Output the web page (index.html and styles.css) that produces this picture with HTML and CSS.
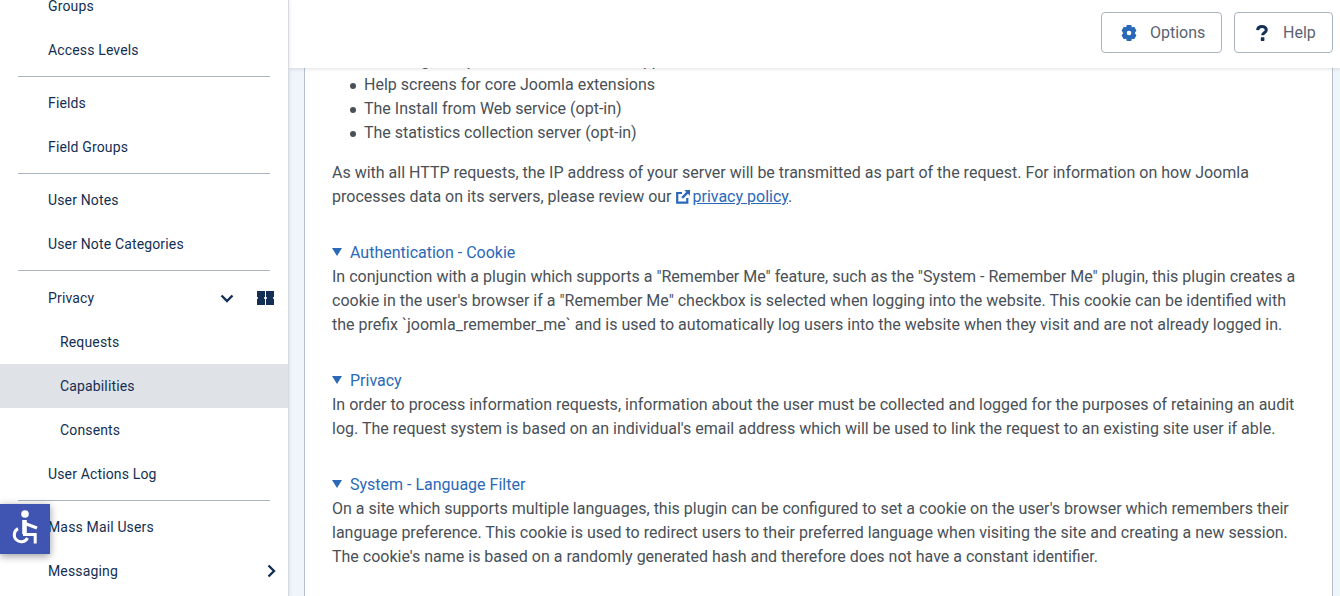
FILE: index.html
```html
<!DOCTYPE html>
<html lang="en">
<head>
<meta charset="utf-8">
<title>Privacy: Capabilities</title>
<link rel="stylesheet" href="styles.css">
</head>
<body>
<div class="app">
  <nav class="sidebar">
    <ul class="menu">
      <li class="item">Groups</li>
      <li class="item">Access Levels</li>
      <li class="divider"></li>
      <li class="item">Fields</li>
      <li class="item">Field Groups</li>
      <li class="divider"></li>
      <li class="item">User Notes</li>
      <li class="item">User Note Categories</li>
      <li class="divider"></li>
      <li class="item">Privacy
        <svg class="chev-down" viewBox="0 0 14 9"><path d="M1.500 1.500 7 7l5.500-5.500" fill="none" stroke="currentColor" stroke-width="2.400"/></svg>
        <svg class="dash" viewBox="0 0 17 14"><path d="M0 0h8v6h-.8v2H8v6H0V8h.8V6H0zM9 0h8v6h-.8v2h.8v6H9V8h.8V6H9z" fill="currentColor"/></svg>
      </li>
      <li class="item sub">Requests</li>
      <li class="item sub active">Capabilities</li>
      <li class="item sub">Consents</li>
      <li class="item">User Actions Log</li>
      <li class="divider"></li>
      <li class="item">Mass Mail Users</li>
      <li class="item">Messaging
        <svg class="chev-right" viewBox="0 0 9 14"><path d="M1.500 1.500 7 7l-5.500 5.500" fill="none" stroke="currentColor" stroke-width="2.400"/></svg>
      </li>
    </ul>
  </nav>
  <main class="main">
    <header class="toolbar">
      <button class="btn btn-options">
        <svg class="ico-gear" viewBox="0 0 16 16"><path fill-rule="evenodd" d="M5.800 0h4.400l.7 2.200 2.300-.5 2.200 3.800L13.800 8l1.600 2.500-2.200 3.800-2.300-.5-.7 2.200H5.800l-.7-2.200-2.300.5L.6 10.500 2.200 8 .6 5.500l2.200-3.800 2.300.5zM8 5.700a2.300 2.300 0 1 0 0 4.600 2.300 2.300 0 0 0 0-4.600z" fill="currentColor"/></svg>
        <span>Options</span>
      </button>
      <button class="btn btn-help">
        <svg class="ico-help" viewBox="0 0 12 16"><path d="M1.600 5.200C1.800 2.900 3.500 1.600 6 1.600c2.500 0 4.300 1.300 4.300 3.300 0 2.900-3.700 2.700-3.700 5.400" fill="none" stroke="currentColor" stroke-width="3"/><rect x="4.800" y="12.300" width="3.600" height="3.600" rx=".6" fill="currentColor"/></svg>
        <span>Help</span>
      </button>
    </header>
    <div class="page">
      <article class="content">
        <ul class="bullets">
          <li>Checking for updates to Joomla and supported extensions</li>
          <li>Help screens for core Joomla extensions</li>
          <li>The Install from Web service (opt-in)</li>
          <li>The statistics collection server (opt-in)</li>
        </ul>
        <p class="para">As with all HTTP requests, the IP address of your server will be transmitted as part of the request. For information on how Joomla processes data on its servers, please review our <a class="ext" href="#"><svg class="ico-ext" viewBox="0 0 14 14"><path d="M11.300 8v4.700H1.200V3H6" fill="none" stroke="currentColor" stroke-width="2.200"/><path d="M8.300 0H14v5.700l-2-2-5 5L5.300 7l5-5z" fill="currentColor"/></svg> <span class="ext-text">privacy policy</span></a>.</p>
        <section class="block">
          <h3 class="summary"><span class="tri"></span>Authentication - Cookie</h3>
          <p class="text">In conjunction with a plugin which supports a "Remember Me" feature, such as the "System - Remember Me" plugin, this plugin creates a cookie in the user's browser if a "Remember Me" checkbox is selected when logging into the website. This cookie can be identified with the prefix `joomla_remember_me` and is used to automatically log users into the website when they visit and are not already logged in.</p>
        </section>
        <section class="block">
          <h3 class="summary"><span class="tri"></span>Privacy</h3>
          <p class="text">In order to process information requests, information about the user must be collected and logged for the purposes of retaining an audit log. The request system is based on an individual's email address which will be used to link the request to an existing site user if able.</p>
        </section>
        <section class="block">
          <h3 class="summary"><span class="tri"></span>System - Language Filter</h3>
          <p class="text">On a site which supports multiple languages, this plugin can be configured to set a cookie on the user's browser which remembers their language preference. This cookie is used to redirect users to their preferred language when visiting the site and creating a new session. The cookie's name is based on a randomly generated hash and therefore does not have a constant identifier.</p>
        </section>
      </article>
    </div>
  </main>
</div>
<button class="a11y" aria-label="Accessibility">
  <svg viewBox="0 0 50 50"><circle cx="25" cy="10" r="3.800" fill="currentColor"/><path d="M24.500 16v14" fill="none" stroke="currentColor" stroke-width="4.600"/><path d="M23 30.500h12.200V39.500" fill="none" stroke="currentColor" stroke-width="3"/><path d="M25 19.500 37 24" fill="none" stroke="currentColor" stroke-width="3"/><path d="M18 24.600A7 7 0 1 0 27.500 34" fill="none" stroke="currentColor" stroke-width="3"/></svg>
</button>
</body>
</html>
```
FILE: styles.css
```css
* { box-sizing: border-box; }
html, body { margin: 0; height: 596px; overflow: hidden; }
body { font-family: Roboto, "Liberation Sans", sans-serif; color: #495057; background: #fff; }
.app { display: flex; height: 596px; }
.sidebar { flex: 0 0 289px; height: 596px; overflow: hidden; background: #fff; border-right: 1px solid #d7dbe0; position: relative; z-index: 3; box-shadow: 1px 0 3px rgba(0,0,0,.08); }
.menu { list-style: none; margin: -16px 0 0; padding: 0; }
.item { display: flex; align-items: center; height: 44px; padding-left: 48px; font-size: 14px; color: #132f53; position: relative; letter-spacing: .15px; }
.item.sub { padding-left: 60px; }
.item.active { background: #dfe2e7; }
.divider { height: 1px; margin: 4px 18px 4.200px; background: #a9b4c1; }
.chev-down { position: absolute; left: 220px; top: 18px; width: 14px; height: 9px; color: #132f53; }
.dash { position: absolute; left: 257px; top: 15px; width: 17px; height: 14px; color: #132f53; }
.chev-right { position: absolute; left: 267px; top: 15px; width: 9px; height: 14px; color: #132f53; }
.main { flex: 1; min-width: 0; display: flex; flex-direction: column; height: 596px; position: relative; }
.toolbar { flex: 0 0 68px; display: flex; justify-content: flex-end; align-items: flex-start; gap: 12px; padding: 12px 7px 0 0; background: #fff; position: relative; z-index: 2; box-shadow: 0 1px 4px rgba(0,0,0,.12); }
.btn { display: flex; align-items: center; height: 41px; background: #fff; border: 1px solid #a9b4c1; border-radius: 4px; font: 400 16px Roboto, sans-serif; color: #5a6470; padding: 0; }
.btn-options { width: 121px; padding-left: 19px; gap: 13px; }
.btn-help { width: 99px; padding-left: 21px; gap: 15px; }
.ico-gear { width: 16px; height: 16px; color: #2a69b8; }
.ico-help { width: 12px; height: 16px; color: #132f53; }
.page { flex: 1; min-height: 0; overflow: hidden; background: #f0f4fb; padding: 0 7px 0 15px; }
.content { display: flow-root; background: #fff; border-left: 1px solid #b4c0d0; border-right: 1px solid #b4c0d0; height: 100%; padding: 0 27px; font-size: 16px; line-height: 24px; color: #495057; }
.bullets { list-style: none; margin: -19px 0 16px; padding-left: 32px; }
.bullets li { position: relative; }
.bullets li::before { content: ""; position: absolute; left: -14px; top: 10px; width: 6px; height: 6px; border-radius: 50%; background: #495057; }
.para { margin: 0; }
.ext { color: #2a69b8; text-decoration: none; }
.ext-text { text-decoration: underline; }
.ico-ext { width: 14px; height: 14px; vertical-align: -2px; margin-right: -1px; }
.block { margin-top: 32px; }
.summary { margin: 0; font-size: 16px; font-weight: 400; line-height: 24px; color: #2a69b8; display: flex; align-items: center; }
.tri { width: 0; height: 0; border-left: 5px solid transparent; border-right: 5px solid transparent; border-top: 8px solid #2a69b8; margin: 0 8px 2px 0; }
.text { margin: 0; }
.a11y { position: fixed; left: 0; top: 504px; width: 50px; height: 50px; padding: 0; border: 0; background: #4054b2; color: #fff; display: block; box-shadow: 0 2px 8px rgba(0,0,0,.4); z-index: 5; }
.a11y svg { display: block; width: 50px; height: 50px; }
```
